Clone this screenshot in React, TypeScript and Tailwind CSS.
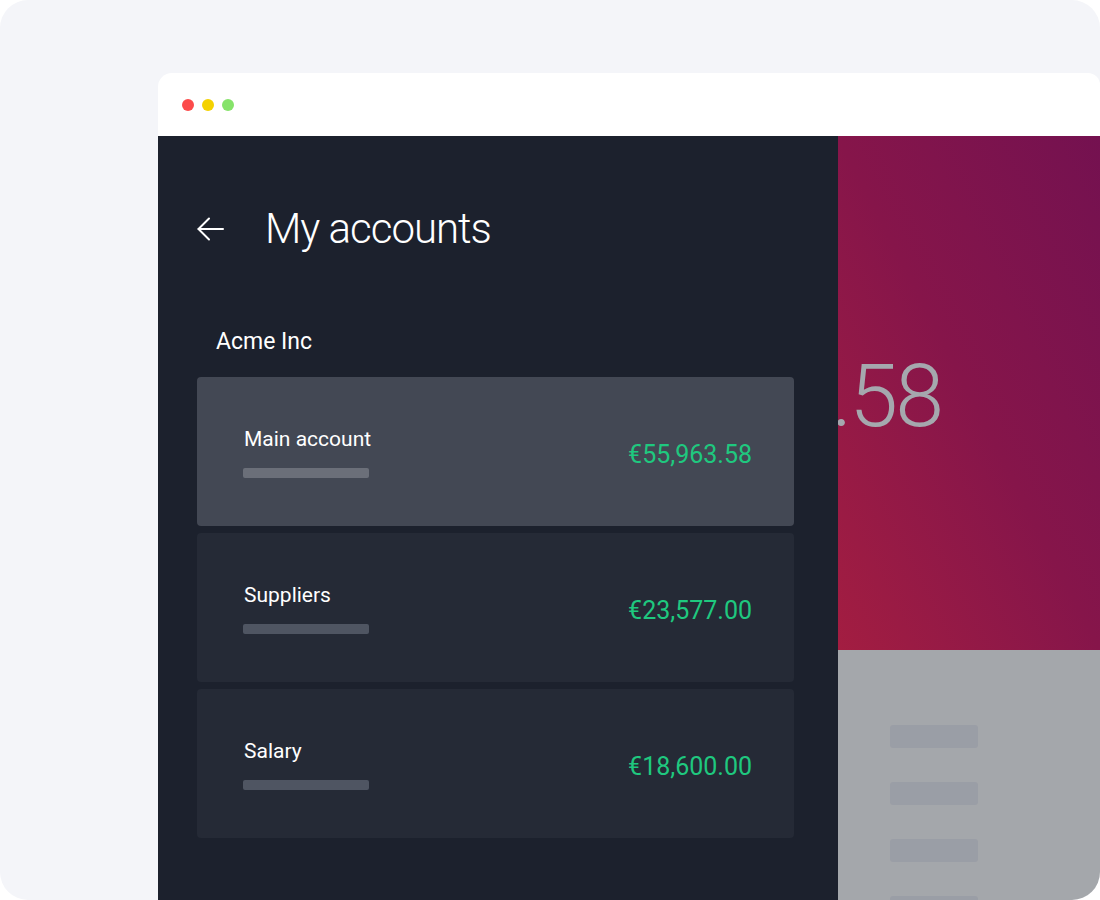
import React from "react";

const accounts = [
  { name: "Main account", amount: "€55,963.58", active: true },
  { name: "Suppliers", amount: "€23,577.00", active: false },
  { name: "Salary", amount: "€18,600.00", active: false },
];

export default function App() {
  return (
    <div className="w-[1100px] h-[900px] bg-white" style={{ fontFamily: "Roboto, 'Liberation Sans', sans-serif" }}>
      <div className="w-full h-full rounded-[28px] overflow-hidden bg-[#f4f5f9] pt-[73px] pl-[158px]">
        <div className="w-full h-full flex flex-col bg-white rounded-tl-[14px] rounded-tr-[12px] overflow-hidden">
          <div className="h-[63px] shrink-0 flex items-center gap-2 pl-[24px]">
            <span className="w-3 h-3 rounded-full bg-[#fc4b4b]" />
            <span className="w-3 h-3 rounded-full bg-[#f4d200]" />
            <span className="w-3 h-3 rounded-full bg-[#86e36a]" />
          </div>
          <div className="flex flex-1 min-h-0">
            <div className="w-[680px] shrink-0 bg-[#1c212d] relative z-10 pt-[68px] pl-[39px] pr-[44px]">
              <div className="flex items-center h-[50px]">
                <svg width="30" height="30" viewBox="0 0 30 30" fill="none" stroke="white" strokeWidth="2" strokeLinecap="round" strokeLinejoin="round" className="-ml-[1px]">
                  <path d="M27 15H2.5" />
                  <path d="M13 4.5L2.5 15L13 25.5" />
                </svg>
                <h1 className="ml-[39px] text-white text-[42px] font-light tracking-[-1px] leading-[50px]">My accounts</h1>
              </div>
              <div className="mt-[74px] ml-[19px] text-white text-[23px] font-normal leading-[28px]">Acme Inc</div>
              <div className="mt-[21px] flex flex-col gap-[7px]">
                {accounts.map((a) => (
                  <div
                    key={a.name}
                    className={`h-[149px] rounded-[4px] flex items-center justify-between pl-[46px] pr-[42px] ${a.active ? "bg-[#434854]" : "bg-[#252a36]"}`}
                  >
                    <div className="flex flex-col">
                      <div className="text-white text-[21px] leading-[26px] pl-[1px]">{a.name}</div>
                      <div className={`mt-[16px] w-[126px] h-[10px] rounded-[2px] ${a.active ? "bg-[#6b6f79]" : "bg-[#4f5562]"}`} />
                    </div>
                    <div className="pt-[6px] text-[#1fc87f] text-[25px] leading-[30px]">{a.amount}</div>
                  </div>
                ))}
              </div>
            </div>
            <div className="flex-1 flex flex-col overflow-hidden">
              <div className="h-[514px] shrink-0 bg-linear-to-bl from-[#741150] via-[#86154a] to-[#a31d41] pt-[208px]">
                <div className="w-[103px] flex justify-end">
                  <div className="whitespace-nowrap text-[#a5a8ae] text-[88px] font-light leading-[104px] tracking-[-3px]">.58</div>
                </div>
              </div>
              <div className="flex-1 bg-[#a4a7ab] pt-[75px] pl-[52px] flex flex-col gap-[34px]">
                <div className="w-[88px] h-[23px] rounded-[3px] bg-[#9a9ea6] shrink-0" />
                <div className="w-[88px] h-[23px] rounded-[3px] bg-[#9a9ea6] shrink-0" />
                <div className="w-[88px] h-[23px] rounded-[3px] bg-[#9a9ea6] shrink-0" />
                <div className="w-[88px] h-[23px] rounded-[3px] bg-[#9a9ea6] shrink-0" />
              </div>
            </div>
          </div>
        </div>
      </div>
    </div>
  );
}
